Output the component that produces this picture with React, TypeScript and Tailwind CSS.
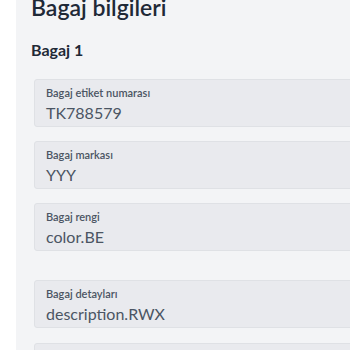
const fields = [
  { label: 'Bagaj etiket numarası', value: 'TK788579' },
  { label: 'Bagaj markası', value: 'YYY' },
  { label: 'Bagaj rengi', value: 'color.BE' },
];

function Field({ label, value }: { label: string; value: string }) {
  return (
    <div className="h-[48px] rounded-[3px] border border-[#dfe1e5] bg-[#e9eaee] pl-[11px] pt-[5px]">
      <div className="text-[11px] leading-[15px] font-semibold text-[#4b5563]">{label}</div>
      <div className="mt-[3px] text-[16px] leading-[20px] text-[#4b5563]">{value}</div>
    </div>
  );
}

export default function App() {
  return (
    <div className="h-[350px] w-[350px] overflow-hidden bg-white" style={{ fontFamily: 'Lato, "Open Sans", sans-serif' }}>
      <div className="ml-4 flex h-[420px] w-[400px] flex-col bg-[#f3f4f6] pl-[15px]">
        <h1 className="mt-[-8px] text-[23px] leading-[30px] font-semibold text-[#1f2937]">Bagaj bilgileri</h1>
        <h2 className="mt-[18px] text-[16px] leading-[20px] font-bold text-[#1f2937]">Bagaj 1</h2>
        <div className="ml-[3px] mt-[19px] flex flex-col">
          <div className="flex flex-col gap-[14px]">
            {fields.map((f) => (
              <Field key={f.label} label={f.label} value={f.value} />
            ))}
          </div>
          <div className="mt-[29px] flex flex-col gap-[15px]">
            <Field label="Bagaj detayları" value="description.RWX" />
            <Field label="" value="" />
          </div>
        </div>
      </div>
    </div>
  );
}
